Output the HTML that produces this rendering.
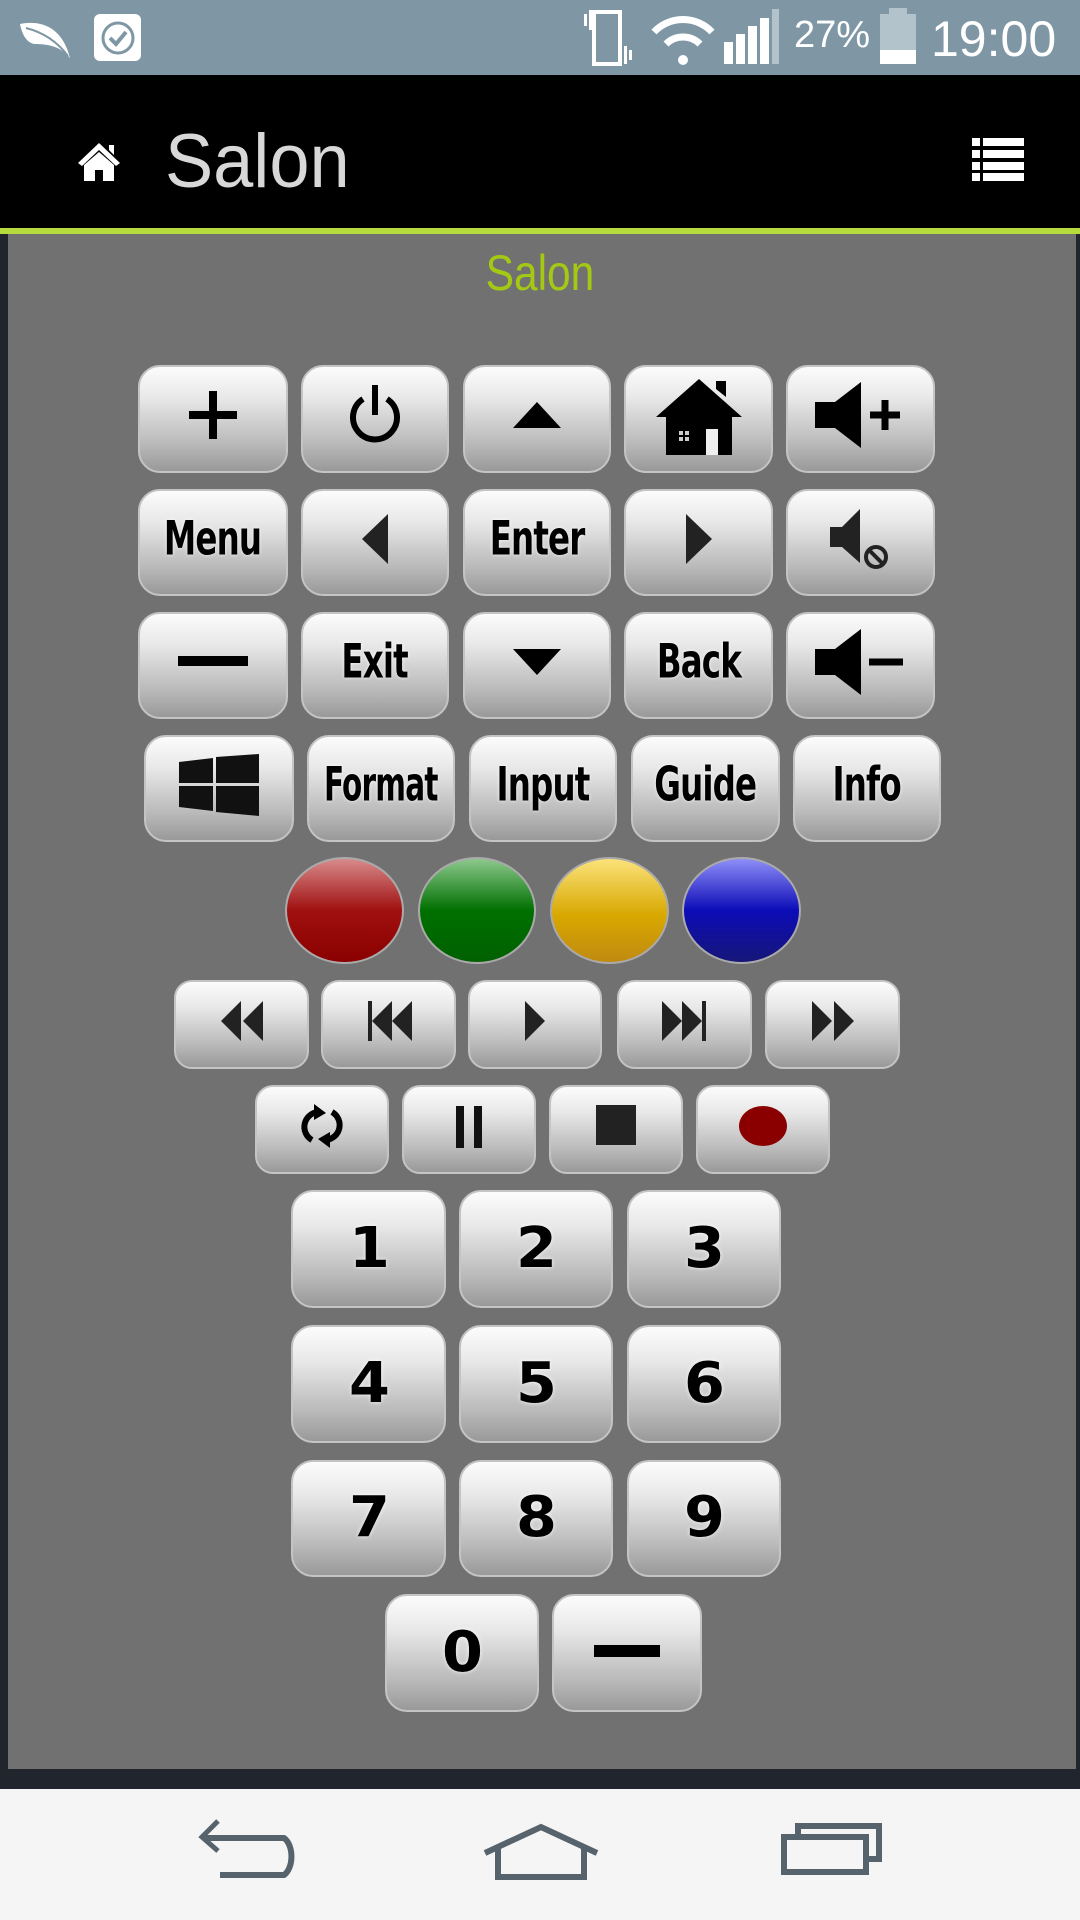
<!DOCTYPE html>
<html><head><meta charset="utf-8">
<style>
*{margin:0;padding:0;box-sizing:border-box}
body{width:1080px;height:1920px;position:relative;background:#21252d;overflow:hidden;font-family:"Liberation Sans",sans-serif}
.abs{position:absolute}
#status{left:0;top:0;width:1080px;height:75px;background:#7f97a5}
#hdr{left:0;top:75px;width:1080px;height:153px;background:#000}
#line{left:0;top:228px;width:1080px;height:6px;background:#b5dc3c}
#content{left:8px;top:234px;width:1068px;height:1535px;background:#717171}
#nav{left:0;top:1789px;width:1080px;height:131px;background:#f5f5f5}
.b{position:absolute;border-radius:22px;border:2px solid #c4c4c4;background:linear-gradient(#fcfcfc 0%,#e8e8e8 30%,#b8b8b8 75%,#999 100%);display:flex;align-items:center;justify-content:center;color:#000;font-family:"DejaVu Sans Condensed","DejaVu Sans",sans-serif;font-weight:bold;font-size:42px;text-shadow:0 0 4px rgba(255,255,255,.9);padding-bottom:8px}
.b span{display:inline-block;transform:scale(0.86,1.12);letter-spacing:-1px}
.n{font-family:"DejaVu Sans",sans-serif;font-size:56px;padding-bottom:2px}
.n span{transform:scale(1.05,1)}
.c{position:absolute;border-radius:50%;border:2px solid #aaa}
</style></head><body>
<div id="status" class="abs">
 <svg class="abs" style="left:18px;top:20px" width="54" height="40" viewBox="0 0 54 40"><path d="M2 4 C22 0 44 6 52 38 C42 26 30 24 16 24 C8 22 4 14 2 4Z" fill="#fff"/><path d="M8 8 C24 12 38 20 50 36" stroke="#7f97a5" stroke-width="2" fill="none"/></svg>
 <div class="abs" style="left:94px;top:14px;width:47px;height:47px;background:#fff;border-radius:6px"></div>
 <svg class="abs" style="left:98px;top:18px" width="40" height="40" viewBox="0 0 40 40"><circle cx="20" cy="20" r="15" fill="none" stroke="#7f97a5" stroke-width="3"/><path d="M12 20 L18 26 L28 14" fill="none" stroke="#7f97a5" stroke-width="4"/></svg>
 <svg class="abs" style="left:582px;top:8px" width="56" height="58" viewBox="0 0 56 58"><rect x="12" y="4" width="26" height="52" fill="none" stroke="#fff" stroke-width="4"/><rect x="2" y="6" width="3" height="12" fill="#fff"/><rect x="7" y="2" width="3" height="20" fill="#fff"/><rect x="42" y="38" width="3" height="18" fill="#fff"/><rect x="47" y="42" width="3" height="10" fill="#fff"/></svg>
 <svg class="abs" style="left:650px;top:14px" width="66" height="52" viewBox="0 0 66 52"><path d="M4 18 A40 40 0 0 1 62 18" fill="none" stroke="#fff" stroke-width="7"/><path d="M16 30 A24 24 0 0 1 50 30" fill="none" stroke="#fff" stroke-width="7"/><circle cx="33" cy="46" r="5" fill="#fff"/></svg>
 <svg class="abs" style="left:724px;top:8px" width="60" height="58" viewBox="0 0 60 58"><rect x="0" y="34" width="9" height="22" fill="#fff"/><rect x="12" y="26" width="9" height="30" fill="#fff"/><rect x="24" y="18" width="9" height="38" fill="#fff"/><rect x="36" y="10" width="9" height="46" fill="#fff"/><rect x="48" y="1" width="7" height="55" fill="#b2c3cc"/></svg>
 <div class="abs" style="left:794px;top:14px;color:#fff;font-size:38px">27%</div>
 <svg class="abs" style="left:880px;top:8px" width="38" height="58" viewBox="0 0 38 58"><rect x="9" y="0" width="18" height="6" fill="#b2c3cc"/><rect x="0" y="6" width="36" height="36" fill="#b2c3cc"/><rect x="0" y="42" width="36" height="14" fill="#fff"/></svg>
 <div class="abs" style="left:931px;top:10px;color:#fff;font-size:50px">19:00</div>
</div>
<div id="hdr" class="abs">
 <svg class="abs" style="left:76px;top:66px" width="46" height="40" viewBox="0 0 46 40"><path d="M23 2 L44 22 L40 25 L23 9 L6 25 L2 22 Z M33 4 h5 v10 l-5 -5Z" fill="#fff"/><path d="M8 24 L23 11 L38 24 V40 H27 V29 H19 V40 H8Z" fill="#fff"/></svg>
 <div class="abs" style="left:165px;top:43px;color:#d8d8d8;font-size:76px;font-weight:100;transform:scaleX(0.95);transform-origin:left">Salon</div>
 <svg class="abs" style="left:972px;top:63px" width="52" height="43" viewBox="0 0 52 43"><g fill="#fff"><rect x="0" y="0" width="8" height="8"/><rect x="11" y="0" width="41" height="8"/><rect x="0" y="12" width="8" height="8"/><rect x="11" y="12" width="41" height="8"/><rect x="0" y="24" width="8" height="8"/><rect x="11" y="24" width="41" height="8"/><rect x="0" y="35" width="8" height="8"/><rect x="11" y="35" width="41" height="8"/></g></svg>
</div>
<div id="line" class="abs"></div>
<div id="content" class="abs"></div>
<div class="abs" style="left:0;top:244px;width:1080px;text-align:center;color:#a4c913;font-size:50px;font-weight:300"><span style="display:inline-block;transform:scaleX(0.85)">Salon</span></div>

<!-- row1 -->
<div class="b" style="left:138px;top:365px;width:150px;height:108px"><svg width="56" height="56" viewBox="0 0 56 56"><path d="M28 4V52M4 28H52" stroke="#000" stroke-width="8"/></svg></div>
<div class="b" style="left:301px;top:365px;width:148px;height:108px"><svg width="60" height="64" viewBox="0 0 60 64"><path d="M18 16 A22 22 0 1 0 42 16" fill="none" stroke="#000" stroke-width="6"/><path d="M30 2V32" stroke="#000" stroke-width="6"/></svg></div>
<div class="b" style="left:463px;top:365px;width:148px;height:108px"><svg width="52" height="30" viewBox="0 0 52 30"><path d="M26 2L50 28H2Z" fill="#000"/></svg></div>
<div class="b" style="left:624px;top:365px;width:149px;height:108px;padding-bottom:4px"><svg width="90" height="80" viewBox="0 0 90 80"><path d="M45 2 L88 40 H78 V78 H12 V40 H2 Z M62 4 H72 V20 L62 12Z" fill="#000"/><rect x="52" y="52" width="12" height="26" fill="#eee"/><g fill="#ccc"><rect x="25" y="54" width="4" height="4"/><rect x="31" y="54" width="4" height="4"/><rect x="25" y="60" width="4" height="4"/><rect x="31" y="60" width="4" height="4"/></g></svg></div>
<div class="b" style="left:786px;top:365px;width:149px;height:108px"><svg width="100" height="70" viewBox="0 0 100 70"><path d="M4 22 H24 L50 2 V68 L24 48 H4 Z" fill="#000"/><path d="M74 20V50M59 35H89" stroke="#000" stroke-width="7"/></svg></div>
<!-- row2 -->
<div class="b" style="left:138px;top:489px;width:150px;height:107px"><span>Menu</span></div>
<div class="b" style="left:301px;top:489px;width:148px;height:107px"><svg width="30" height="54" viewBox="0 0 30 54"><path d="M28 2V52L2 27Z" fill="#222"/></svg></div>
<div class="b" style="left:463px;top:489px;width:148px;height:107px"><span>Enter</span></div>
<div class="b" style="left:624px;top:489px;width:149px;height:107px"><svg width="30" height="54" viewBox="0 0 30 54"><path d="M2 2V52L28 27Z" fill="#222"/></svg></div>
<div class="b" style="left:786px;top:489px;width:149px;height:107px"><svg width="70" height="64" viewBox="0 0 70 64"><path d="M4 20 H16 L34 2 V56 L16 40 H4 Z" fill="#222"/><circle cx="50" cy="50" r="10" fill="none" stroke="#222" stroke-width="4"/><path d="M43 43L57 57" stroke="#222" stroke-width="4"/></svg></div>
<!-- row3 -->
<div class="b" style="left:138px;top:612px;width:150px;height:107px"><svg width="70" height="12" viewBox="0 0 70 12"><rect width="70" height="10" fill="#000"/></svg></div>
<div class="b" style="left:301px;top:612px;width:148px;height:107px"><span>Exit</span></div>
<div class="b" style="left:463px;top:612px;width:148px;height:107px"><svg width="52" height="30" viewBox="0 0 52 30"><path d="M2 2H50L26 28Z" fill="#000"/></svg></div>
<div class="b" style="left:624px;top:612px;width:149px;height:107px"><span>Back</span></div>
<div class="b" style="left:786px;top:612px;width:149px;height:107px"><svg width="100" height="70" viewBox="0 0 100 70"><path d="M4 22 H24 L50 2 V68 L24 48 H4 Z" fill="#000"/><path d="M58 35H92" stroke="#000" stroke-width="7"/></svg></div>
<!-- row4 -->
<div class="b" style="left:144px;top:735px;width:150px;height:107px"><svg width="84" height="62" viewBox="0 0 84 62"><path d="M2 8L36 4V29H2Z M39 3L82 0V29H39Z M2 32H36V57L2 53Z M39 32H82V62L39 58Z" fill="#111"/></svg></div>
<div class="b" style="left:307px;top:735px;width:148px;height:107px"><span style="transform:scale(0.78,1.12)">Format</span></div>
<div class="b" style="left:469px;top:735px;width:148px;height:107px"><span>Input</span></div>
<div class="b" style="left:631px;top:735px;width:149px;height:107px"><span>Guide</span></div>
<div class="b" style="left:793px;top:735px;width:148px;height:107px"><span>Info</span></div>
<!-- colors -->
<div class="c" style="left:285px;top:857px;width:119px;height:107px;background:linear-gradient(#d88a8a,#a01010 50%,#8a0000)"></div>
<div class="c" style="left:418px;top:857px;width:118px;height:107px;background:linear-gradient(#8cc88c,#007000 50%,#006000)"></div>
<div class="c" style="left:550px;top:857px;width:119px;height:107px;background:linear-gradient(#fbe27a,#d8a800 55%,#c08a10)"></div>
<div class="c" style="left:682px;top:857px;width:119px;height:107px;background:linear-gradient(#8e8ef8,#0c0cb8 50%,#161678)"></div>
<!-- media 1 -->
<div class="b" style="left:174px;top:980px;width:135px;height:89px;border-radius:18px"><svg width="46" height="44" viewBox="0 0 46 44"><path d="M22 2V42L2 22Z M44 2V42L24 22Z" fill="#222"/></svg></div>
<div class="b" style="left:321px;top:980px;width:135px;height:89px;border-radius:18px"><svg width="46" height="44" viewBox="0 0 46 44"><rect x="2" y="2" width="4" height="40" fill="#222"/><path d="M26 2V42L6 22Z M46 2V42L26 22Z" fill="#222"/></svg></div>
<div class="b" style="left:468px;top:980px;width:134px;height:89px;border-radius:18px"><svg width="24" height="44" viewBox="0 0 24 44"><path d="M2 2V42L22 22Z" fill="#222"/></svg></div>
<div class="b" style="left:617px;top:980px;width:135px;height:89px;border-radius:18px"><svg width="46" height="44" viewBox="0 0 46 44"><path d="M0 2V42L20 22Z M20 2V42L40 22Z" fill="#222"/><rect x="40" y="2" width="4" height="40" fill="#222"/></svg></div>
<div class="b" style="left:765px;top:980px;width:135px;height:89px;border-radius:18px"><svg width="46" height="44" viewBox="0 0 46 44"><path d="M2 2V42L22 22Z M24 2V42L44 22Z" fill="#222"/></svg></div>
<!-- media 2 -->
<div class="b" style="left:255px;top:1085px;width:134px;height:89px;border-radius:18px"><svg width="44" height="44" viewBox="0 0 44 44"><path d="M12 36 A15 15 0 0 1 18 8" fill="none" stroke="#000" stroke-width="6"/><path d="M14 0L26 9L14 16Z" fill="#000"/><path d="M32 8 A15 15 0 0 1 26 36" fill="none" stroke="#000" stroke-width="6"/><path d="M30 44L18 35L30 28Z" fill="#000"/></svg></div>
<div class="b" style="left:402px;top:1085px;width:134px;height:89px;border-radius:18px"><svg width="30" height="44" viewBox="0 0 30 44"><rect x="2" y="2" width="8" height="42" fill="#111"/><rect x="20" y="2" width="8" height="42" fill="#111"/></svg></div>
<div class="b" style="left:549px;top:1085px;width:134px;height:89px;border-radius:18px"><svg width="40" height="42" viewBox="0 0 40 42"><rect x="0" y="0" width="40" height="40" fill="#222"/></svg></div>
<div class="b" style="left:696px;top:1085px;width:134px;height:89px;border-radius:18px"><svg width="50" height="42" viewBox="0 0 50 42"><ellipse cx="25" cy="21" rx="24" ry="20" fill="#8a0000"/></svg></div>
<!-- numbers -->
<div class="b n" style="left:291px;top:1190px;width:155px;height:118px"><span>1</span></div>
<div class="b n" style="left:459px;top:1190px;width:154px;height:118px"><span>2</span></div>
<div class="b n" style="left:627px;top:1190px;width:154px;height:118px"><span>3</span></div>
<div class="b n" style="left:291px;top:1325px;width:155px;height:118px"><span>4</span></div>
<div class="b n" style="left:459px;top:1325px;width:154px;height:118px"><span>5</span></div>
<div class="b n" style="left:627px;top:1325px;width:154px;height:118px"><span>6</span></div>
<div class="b n" style="left:291px;top:1460px;width:155px;height:117px"><span>7</span></div>
<div class="b n" style="left:459px;top:1460px;width:154px;height:117px"><span>8</span></div>
<div class="b n" style="left:627px;top:1460px;width:154px;height:117px"><span>9</span></div>
<div class="b n" style="left:385px;top:1594px;width:154px;height:118px"><span>0</span></div>
<div class="b n" style="left:552px;top:1594px;width:150px;height:118px"><svg width="66" height="14" viewBox="0 0 66 14"><rect width="66" height="12" fill="#000"/></svg></div>

<div id="nav" class="abs">
 <svg class="abs" style="left:196px;top:30px" width="106" height="60" viewBox="0 0 106 60"><path d="M22 2 L6 18 L22 32" fill="none" stroke="#56636d" stroke-width="5"/><path d="M8 19 H88 A12 20 0 0 1 88 56 H24" fill="none" stroke="#56636d" stroke-width="6"/></svg>
 <svg class="abs" style="left:483px;top:34px" width="116" height="58" viewBox="0 0 116 58"><path d="M2 30 L58 4 L114 30" fill="none" stroke="#56636d" stroke-width="6"/><path d="M15 26 V54 H101 V26" fill="none" stroke="#56636d" stroke-width="6"/></svg>
 <svg class="abs" style="left:781px;top:34px" width="102" height="52" viewBox="0 0 102 52"><rect x="3" y="14" width="82" height="35" fill="none" stroke="#56636d" stroke-width="6"/><path d="M17 12 V3 H98 V36 H88" fill="none" stroke="#56636d" stroke-width="6"/></svg>
</div>
</body></html>
